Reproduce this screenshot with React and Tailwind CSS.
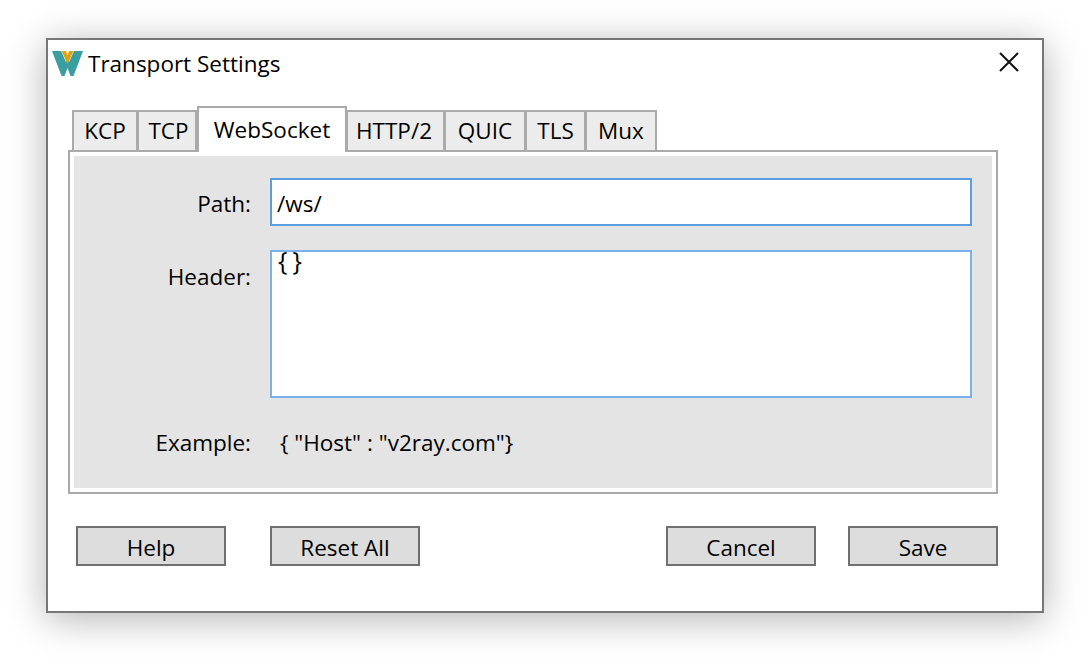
import React from 'react';

const font = "font-['Open_Sans','Noto_Sans',sans-serif]";

const tabs = [
    { name: 'KCP', w: 'w-[66px]' },
    { name: 'TCP', w: 'w-[60px]', pad: 'pl-[3px]' },
    { name: 'WebSocket', w: 'w-[150px]', active: true },
    { name: 'HTTP/2', w: 'w-[99px]', pad: 'pr-[3px]' },
    { name: 'QUIC', w: 'w-[82px]' },
    { name: 'TLS', w: 'w-[61px]' },
    { name: 'Mux', w: 'w-[72px]' },
];

const Logo = () => (
    <svg width="31" height="25" viewBox="0 0 31 25" className="shrink-0">
        <path d="M0 0h9l5 11 1.5-4 1.5 4 5-11h9L21.5 25h-3L15.5 17l-3 8h-3z" fill="#3a9ea0" />
        <path d="M9.5 0h4.5l1.5 4 1.5-4h4.5l-6 13z" fill="#d9a40f" />
    </svg>
);

const Tab = ({ name, w, active, pad = '' }) => (
    active ? (
        <div className={`${w} h-[46px] z-10 relative border-2 border-b-0 border-[#aaaaaa] bg-white flex items-center justify-center`}>
            {name}
        </div>
    ) : (
        <div className={`${w} ${pad} h-[42px] border-2 border-[#aaaaaa] -ml-px first:ml-0 bg-[#ececec] flex items-center justify-center`}>
            {name}
        </div>
    )
);

const Button = ({ children }) => (
    <button className="w-[150px] h-[40px] border-2 border-[#707070] bg-[#dddddd] flex items-center justify-center pt-[4px]">
        {children}
    </button>
);

const App = () => {
    return (
        <div className={`relative w-[1090px] h-[668px] bg-white overflow-hidden text-[22.5px] text-black ${font}`}>
            <div className="pt-[38px] pl-[46px]">
                <div className="relative w-[998px] h-[575px] border-2 border-[#777777] bg-white shadow-[0_6px_36px_rgba(0,0,0,0.3)] flex flex-col">
                    <div className="h-[46px] flex items-center pl-[4px] pr-[23px] justify-between">
                        <div className="flex items-center gap-[5px]">
                            <Logo />
                            <span className="pt-[2px]">Transport Settings</span>
                        </div>
                        <svg width="20" height="20" viewBox="0 0 20 20" stroke="#111" strokeWidth="2" fill="none" className="mb-[2px]">
                            <path d="M1 1l18 18M19 1L1 19" />
                        </svg>
                    </div>

                    <div className="ml-[20px] mt-[20px] w-[930px]">
                        <div className="flex items-end pl-[4px] h-[46px] -mb-[2px]">
                            {tabs.map(t => <Tab key={t.name} {...t} />)}
                        </div>
                        <div className="h-[344px] border-2 border-[#aaaaaa] p-[4px] bg-white">
                            <div className="h-full bg-[#e4e4e4] pt-[22px] pr-[20px] flex flex-col">
                                <div className="flex items-center h-[48px]">
                                    <label className="w-[177px] text-right pt-[3px]">Path:</label>
                                    <input defaultValue="/ws/" className="ml-[19px] w-[702px] h-[48px] border-2 border-[#5a9ee0] bg-white px-[5px] pt-[3px] outline-none" />
                                </div>
                                <div className="flex items-start mt-[24px]">
                                    <label className="w-[177px] text-right pt-[10px]">Header:</label>
                                    <textarea defaultValue="{}" className="ml-[19px] w-[702px] h-[148px] border-2 border-[#7cb0e8] bg-white pl-[6px] text-[25px] tracking-[5px] leading-[17px] outline-none resize-none" />
                                </div>
                                <div className="flex items-center mt-[28px]">
                                    <label className="w-[177px] text-right">Example:</label>
                                    <span className="ml-[29px]">{'{ "Host" : "v2ray.com"}'}</span>
                                </div>
                            </div>
                        </div>
                    </div>

                    <div className="flex ml-[28px] mt-[32px] w-[922px]">
                        <Button>Help</Button>
                        <div className="ml-[44px]"><Button>Reset All</Button></div>
                        <div className="ml-auto"><Button>Cancel</Button></div>
                        <div className="ml-[32px]"><Button>Save</Button></div>
                    </div>
                </div>
            </div>
        </div>
    );
};

export default App;
